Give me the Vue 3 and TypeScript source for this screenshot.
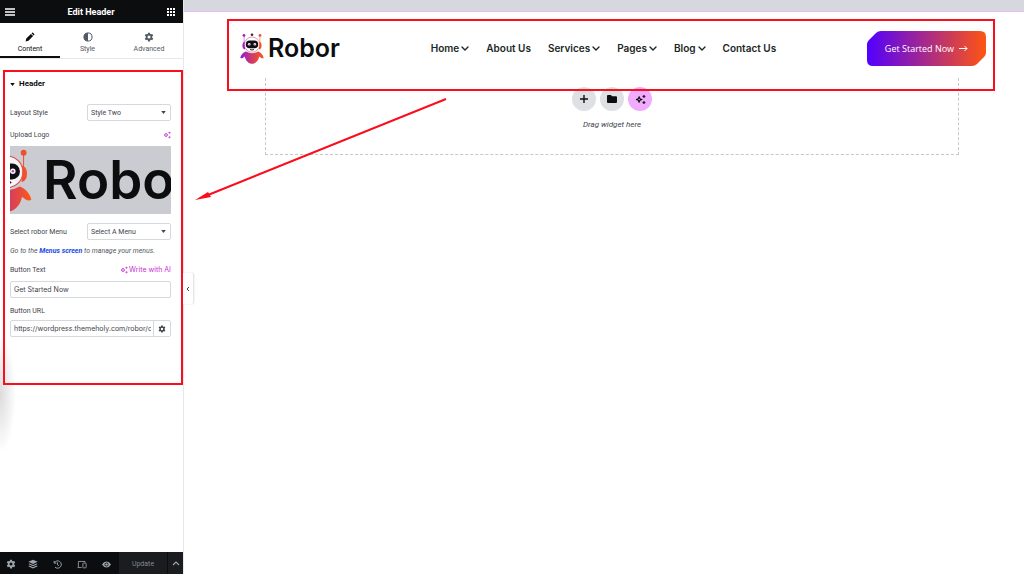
<script setup lang="ts">
import { ref } from 'vue'

interface NavItem {
  label: string
  menu: boolean
}

const tabs = ['Content', 'Style', 'Advanced']
const activeTab = ref('Content')
const layoutStyle = ref('Style Two')
const menuName = ref('Select A Menu')
const buttonText = ref('Get Started Now')
const buttonUrl = ref('https://wordpress.themeholy.com/robor/contact/')
const navItems: NavItem[] = [
  { label: 'Home', menu: true },
  { label: 'About Us', menu: false },
  { label: 'Services', menu: true },
  { label: 'Pages', menu: true },
  { label: 'Blog', menu: true },
  { label: 'Contact Us', menu: false },
]
</script>

<template>
  <svg class="defs" aria-hidden="true">
    <defs>
      <linearGradient id="brand" x1="0" y1="0" x2="24" y2="0" gradientUnits="userSpaceOnUse">
        <stop offset="0" stop-color="#8a1be0" />
        <stop offset="0.5" stop-color="#d03a68" />
        <stop offset="1" stop-color="#ff5a14" />
      </linearGradient>
      <symbol id="robot" viewBox="0 0 24 31">
        <g fill="url(#brand)">
          <circle cx="4" cy="2.4" r="1.4" />
          <circle cx="20" cy="2.4" r="1.4" />
          <rect x="3.8" y="3" width="0.5" height="7" />
          <rect x="19.7" y="3" width="0.5" height="7" />
          <path d="M5 8.500Q2.400 9 2.400 12.500T5 16.500ZM19 8.500Q21.600 9 21.600 12.500T19 16.500Z" />
          <path d="M6 18.600Q12 22 18 18.600C20 19 23 21.500 23.700 25C22 26 20.500 24.500 19.200 23.500C18.500 28 15 30.800 12 30.800S5.500 28 4.800 23.500C3.500 24.500 2 26 .3 25C1 21.500 4 19 6 18.600Z" />
        </g>
        <circle cx="12" cy="1.700" r="1.300" fill="#40203a" />
        <circle cx="12" cy="11.600" r="7.600" fill="#fff" fill-opacity="0.800" stroke="url(#brand)" stroke-width="0.500" />
        <rect x="5.800" y="7.600" width="12.400" height="7.600" rx="3.800" fill="#101014" />
        <circle cx="9.200" cy="11.300" r="1.300" fill="#fff" />
        <circle cx="14.800" cy="11.300" r="1.300" fill="#fff" />
        <circle cx="9.200" cy="11.300" r="0.600" fill="#a020d0" />
        <circle cx="14.800" cy="11.300" r="0.600" fill="#d03ac0" />
        <path d="M10 16.500Q12 17.500 14 16.500" fill="none" stroke="#101014" stroke-width="0.900" />
      </symbol>
      <symbol id="gear" viewBox="0 0 16 16">
        <path fill="currentColor" fill-rule="evenodd" d="M6.500 1h3l.4 2 1.300.7 2-.7 1.500 2.600-1.600 1.400v2l1.600 1.400-1.500 2.600-2-.7-1.300.7-.4 2h-3l-.4-2-1.300-.7-2 .7L1.300 10.400 2.900 9V7L1.300 5.600 2.800 3l2 .7L6.100 3ZM8 5.600a2.400 2.400 0 1 0 0 4.800a2.400 2.400 0 1 0 0-4.800Z" />
      </symbol>
      <symbol id="sparkle" viewBox="0 0 16 16">
        <path d="M6 4L7.200 6.800L10 8L7.200 9.200L6 12L4.800 9.200L2 8L4.800 6.800Z" fill="none" stroke="currentColor" stroke-width="1.600" stroke-linejoin="round" />
        <path d="M13 1.500L13.700 2.800L15 3.500L13.700 4.200L13 5.500L12.300 4.200L11 3.500L12.300 2.800ZM13 10.500L13.700 11.800L15 12.500L13.700 13.200L13 14.500L12.300 13.200L11 12.500L12.300 11.800Z" fill="currentColor" stroke="currentColor" stroke-width="0.800" />
      </symbol>
    </defs>
  </svg>

  <div class="editor">
    <aside class="panel">
      <header class="panel-head">
        <button class="bare" aria-label="Menu">
          <svg width="10" height="8" viewBox="0 0 10 8"><path d="M0 1h10M0 4h10M0 7h10" stroke="#fff" stroke-width="1.300" /></svg>
        </button>
        <h1>Edit Header</h1>
        <button class="bare" aria-label="Widgets">
          <svg width="8" height="8" viewBox="0 0 8 8"><path d="M0 1h8M0 4h8M0 7h8" stroke="#fff" stroke-width="2" stroke-dasharray="2 1" /></svg>
        </button>
      </header>

      <nav class="tabs">
        <button v-for="tab in tabs" :key="tab" :class="['tab', { active: activeTab === tab }]" @click="activeTab = tab">
          <svg v-if="tab === 'Content'" width="10" height="10" viewBox="0 0 16 16"><path fill="currentColor" d="M1 15L2 10.500L9.500 3L13 6.500L5.500 14ZM10.400 2.100L11.500 1.200Q12.300.7 13 1.300L14.700 3Q15.300 3.800 14.800 4.600L13.900 5.600Z" /></svg>
          <svg v-else-if="tab === 'Style'" width="10" height="10" viewBox="0 0 16 16"><circle cx="8" cy="8" r="6.500" fill="none" stroke="currentColor" stroke-width="1.600" /><path fill="currentColor" d="M8 1.500a6.500 6.500 0 0 0 0 13Z" /></svg>
          <svg v-else width="10" height="10"><use href="#gear" /></svg>
          <span>{{ tab }}</span>
        </button>
      </nav>

      <section class="controls">
        <h2>
          <svg width="5" height="3" viewBox="0 0 6 4"><path d="M0 0h6L3 4Z" fill="currentColor" /></svg>
          Header
        </h2>
        <div class="row">
          <label for="layout">Layout Style</label>
          <div class="select">
            <select id="layout" v-model="layoutStyle"><option>Style One</option><option>Style Two</option></select>
            <svg width="5" height="3" viewBox="0 0 6 4"><path d="M0 0h6L3 4Z" fill="currentColor" /></svg>
          </div>
        </div>
        <div class="caption">
          <span>Upload Logo</span>
          <button class="ai" aria-label="Create with AI"><svg width="8" height="8"><use href="#sparkle" /></svg></button>
        </div>
        <div class="preview">
          <svg class="preview-robot" viewBox="0 0 24 31"><use href="#robot" /></svg>
          <span>Robor</span>
        </div>
        <div class="row menu-row">
          <label for="menu">Select robor Menu</label>
          <div class="select">
            <select id="menu" v-model="menuName"><option>Select A Menu</option></select>
            <svg width="5" height="3" viewBox="0 0 6 4"><path d="M0 0h6L3 4Z" fill="currentColor" /></svg>
          </div>
        </div>
        <p class="help">Go to the <a href="#menus">Menus screen</a> to manage your menus.</p>
        <div class="caption">
          <label for="btn-text">Button Text</label>
          <button class="ai"><svg width="8" height="8"><use href="#sparkle" /></svg>Write with AI</button>
        </div>
        <div class="field"><input id="btn-text" v-model="buttonText" type="text" /></div>
        <div class="caption url-caption"><label for="btn-url">Button URL</label></div>
        <div class="field">
          <input id="btn-url" v-model="buttonUrl" type="text" />
          <button class="options" aria-label="Link options"><svg width="8" height="8"><use href="#gear" /></svg></button>
        </div>
      </section>

      <footer class="panel-foot">
        <button class="bare" aria-label="Settings"><svg width="10" height="10"><use href="#gear" /></svg></button>
        <button class="bare" aria-label="Structure"><svg width="10" height="10" viewBox="0 0 16 16" fill="currentColor"><path d="M8 1L15.500 4.500L8 8L.5 4.500Z" /><path d="M2.500 7L8 9.600L13.500 7L15.500 8L8 11.600L.5 8Z" /><path d="M2.500 10.500L8 13.100L13.500 10.500L15.500 11.500L8 15L.5 11.500Z" /></svg></button>
        <button class="bare" aria-label="History"><svg width="9" height="9" viewBox="0 0 16 16" fill="none" stroke="currentColor" stroke-width="1.700"><path d="M2.500 5A6.500 6.500 0 1 1 3.500 12.500M2 1.500V5.500H6M8 4.500V8.500L10.500 10" /></svg></button>
        <button class="bare" aria-label="Responsive mode"><svg width="10" height="9" viewBox="0 0 18 16" fill="none" stroke="currentColor" stroke-width="1.500"><path d="M8.500 13.500H1M2.500 13V2.500H14.500V4.500" /><rect x="10.500" y="5.500" width="6" height="8.500" rx="1" /></svg></button>
        <button class="bare" aria-label="Preview"><svg width="9" height="7" viewBox="0 0 18 14"><path fill="currentColor" fill-rule="evenodd" d="M0 7Q3.500 1 9 1T18 7Q14.500 13 9 13T0 7ZM9 3a4 4 0 1 0 0 8a4 4 0 1 0 0-8Z" /><circle cx="9" cy="7" r="2.500" fill="currentColor" /></svg></button>
        <button class="update">Update</button>
        <button class="more" aria-label="Save options"><svg width="8" height="5" viewBox="0 0 8 5"><path d="M1 4L4 1L7 4" fill="none" stroke="currentColor" stroke-width="1.200" /></svg></button>
      </footer>
      <div class="edge-shade"></div>
      <button class="collapse" aria-label="Collapse panel"><svg width="4" height="6" viewBox="0 0 4 6"><path d="M3 1L1 3L3 5" fill="none" stroke="currentColor" /></svg></button>
      <div class="mark panel-mark"></div>
    </aside>

    <main class="canvas">
      <div class="strip"></div>
      <header class="site-head">
        <a class="logo" href="#home"><svg class="logo-robot" viewBox="0 0 24 31"><use href="#robot" /></svg>Robor</a>
        <nav class="site-nav">
          <a v-for="item in navItems" :key="item.label" href="#page">
            {{ item.label }}
            <svg v-if="item.menu" width="8" height="5" viewBox="0 0 8 5"><path d="M1 1L4 4L7 1" fill="none" stroke="currentColor" stroke-width="1.400" stroke-linecap="round" /></svg>
          </a>
        </nav>
        <a class="cta" href="#start">
          <svg class="cta-shape" viewBox="0 0 119 35" preserveAspectRatio="none">
            <defs><linearGradient id="cta-fill"><stop offset="0" stop-color="#5200ff" /><stop offset="1" stop-color="#ff5512" /></linearGradient></defs>
            <path fill="url(#cta-fill)" d="M14 0H113Q119 0 119 6V22Q119 24 117 26L110 33Q108 35 105 35H6Q0 35 0 29V13Q0 11 2 9L9 2Q11 0 14 0Z" />
          </svg>
          <span>Get Started Now</span>
          <svg width="9" height="7" viewBox="0 0 9 7"><path d="M0 3.500H8M5.500 1L8 3.500L5.500 6" fill="none" stroke="currentColor" /></svg>
        </a>
        <div class="mark head-mark"></div>
      </header>
      <section class="drop">
        <div class="drop-actions">
          <button aria-label="Add element"><svg width="8" height="8" viewBox="0 0 8 8"><path d="M4 0V8M0 4H8" stroke="currentColor" stroke-width="1.400" /></svg></button>
          <button aria-label="Add template"><svg width="10" height="8" viewBox="0 0 10 8"><path fill="currentColor" d="M1 0H4L5 1.200H9Q10 1.200 10 2.200V7Q10 8 9 8H1Q0 8 0 7V1Q0 0 1 0Z" /></svg></button>
          <button class="pink" aria-label="Build with AI"><svg width="11" height="11"><use href="#sparkle" /></svg></button>
        </div>
        <p>Drag widget here</p>
      </section>
    </main>

    <svg class="arrow" width="252" height="104" viewBox="0 0 252 104" aria-hidden="true">
      <path d="M251 1L13 97" stroke="#fb0d1b" stroke-width="2" />
      <path d="M0 102L13 94L16 99Z" fill="#fb0d1b" />
    </svg>
  </div>
</template>

<style>
body { margin: 0; background: #fff; }
</style>

<style scoped>
* { box-sizing: border-box; }
button, input, select { font: inherit; color: inherit; margin: 0; padding: 0; border: 0; background: none; }
svg { display: block; flex: none; }
a { color: inherit; text-decoration: none; }
.defs { position: absolute; width: 0; height: 0; }
.editor { position: relative; display: flex; min-height: 100vh; font-family: Roboto, "Liberation Sans", sans-serif; }

.panel { position: relative; display: flex; flex-direction: column; flex: none; width: 184px; border-right: 1px solid #e8e8ea; font-size: 7px; line-height: 10px; color: #3f444b; background: #fff; }
.panel-head { display: flex; align-items: center; justify-content: space-between; height: 23px; padding: 0 8px 0 5px; background: #0c0d0e; color: #fff; }
.panel-head h1 { margin: 0; font-size: 9px; font-weight: 700; }
.tabs { display: grid; grid-template-columns: 60fr 55fr 68fr; height: 36px; border-bottom: 1px solid #e6e8ea; }
.tab { display: flex; flex-direction: column; align-items: center; gap: 2px; padding-top: 9px; border-bottom: 2px solid transparent; color: #515962; }
.tab.active { color: #0c0d0e; border-color: #0c0d0e; }
.controls { display: flex; flex-direction: column; flex: 1; padding: 15px 12px 0 10px; }
.controls h2 { display: flex; align-items: center; gap: 4px; height: 20px; margin: 0 0 10px; font-size: 8px; font-weight: 700; color: #0c0d0e; }
.row { display: flex; align-items: center; justify-content: space-between; }
.select { position: relative; width: 84px; height: 17px; border: 1px solid #d5d8dc; border-radius: 2px; }
.select select { width: 100%; height: 100%; padding-left: 3px; appearance: none; }
.select svg { position: absolute; right: 4px; top: 6px; pointer-events: none; }
.caption { display: flex; align-items: center; justify-content: space-between; height: 10px; margin: 9px 0 6px; }
.url-caption { margin: 8px 0 4px; }
.ai { display: flex; align-items: center; gap: 1px; color: #c92ad6; }
.ai, .field input { font-family: Inter, "Liberation Sans", sans-serif; }
.preview { position: relative; display: flex; align-items: center; height: 68px; overflow: hidden; background: #caccd1; }
.preview-robot { width: 50px; height: 66px; margin-left: -28px; margin-right: 11px; }
.preview span, .logo { font-family: Inter, "Liberation Sans", sans-serif; font-weight: 600; color: #0c0d0e; }
.preview span { font-size: 53px; line-height: 68px; }
.menu-row { margin-top: 9px; }
.help { margin: 6px 0 0; font-style: italic; color: #515962; white-space: nowrap; }
.help a { font-weight: 700; color: #1646e8; }
.field { display: flex; height: 17px; border: 1px solid #d5d8dc; border-radius: 2px; }
.field input { flex: 1; min-width: 0; padding: 0 2px 0 3px; }
.options { display: flex; align-items: center; justify-content: center; width: 17px; border-left: 1px solid #d5d8dc; }
.panel-foot { display: flex; align-items: stretch; height: 22px; background: #0c0d0e; color: #9da5ae; }
.bare { display: flex; align-items: center; justify-content: center; }
.panel-foot .bare { flex: 1; padding-top: 2px; }
.panel-foot .bare:first-child { flex: 0 0 21px; }
.update { width: 48px; padding-top: 2px; background: #1a1c1f; color: #818a96; }
.more { display: flex; align-items: center; justify-content: center; width: 16px; background: #1a1c1f; border-left: 1px solid #0c0d0e; }
.edge-shade { position: absolute; left: 0; top: 59px; width: 24px; height: 390px; background: radial-gradient(ellipse 16px 60px at 0 335px, rgba(0, 0, 0, 0.14), transparent); pointer-events: none; }
.collapse { position: absolute; left: 183px; top: 273px; display: flex; align-items: center; justify-content: center; width: 10px; height: 31px; background: #fff; border-radius: 0 2px 2px 0; box-shadow: 1px 0 2px rgba(0, 0, 0, 0.14); }
.mark { position: absolute; border: 2px solid #fb0d1b; pointer-events: none; z-index: 2; }
.panel-mark { left: 3px; right: 0; top: 70px; height: 315px; }

.canvas { flex: 1; min-width: 0; }
.strip { height: 12px; background: #d5d8dc; border-bottom: 1px solid #efb8fa; }
.site-head { position: relative; display: flex; align-items: center; justify-content: space-between; height: 66px; padding: 6px 38px 0 56px; }
.head-mark { left: 43px; right: 29px; top: 7px; height: 72px; }
.logo { display: flex; align-items: center; gap: 4px; font-size: 25px; line-height: 32px; }
.logo-robot { width: 24px; height: 31px; }
.site-nav { display: flex; gap: 17px; font-family: Inter, "Liberation Sans", sans-serif; font-size: 10px; font-weight: 600; line-height: 14px; color: #20281e; }
.site-nav a { display: flex; align-items: center; gap: 2px; white-space: nowrap; }
.cta { position: relative; display: flex; align-items: center; justify-content: center; gap: 5px; width: 119px; height: 35px; font-family: "Open Sans", "Liberation Sans", sans-serif; font-size: 9px; color: #fff; white-space: nowrap; }
.cta-shape { position: absolute; inset: 0; width: 100%; height: 100%; }
.cta > :not(.cta-shape) { position: relative; }
.drop { margin: 0 65px 0 81px; height: 77px; padding-top: 9px; border: 1px dashed #c4c7cc; border-top: 0; }
.drop-actions { display: flex; justify-content: center; gap: 4px; }
.drop-actions button { display: flex; align-items: center; justify-content: center; width: 24px; height: 24px; border-radius: 50%; background: #dfe0e3; color: #0c0d0e; }
.drop-actions .pink { background: #f0abfc; }
.drop p { margin: 8px 0 0; font-size: 8px; line-height: 12px; font-style: italic; text-align: center; color: #3f444b; }
.arrow { position: absolute; left: 195px; top: 98px; pointer-events: none; }
</style>
